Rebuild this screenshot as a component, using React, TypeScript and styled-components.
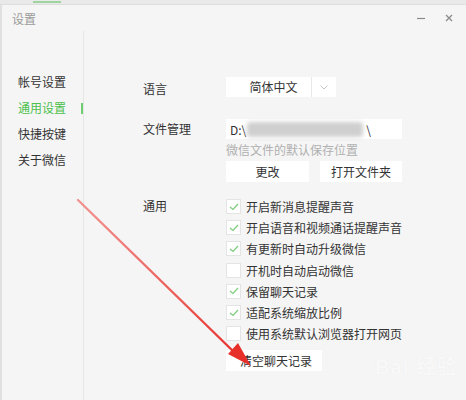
import React from "react";
import styled, { createGlobalStyle } from "styled-components";

const GlobalStyle = createGlobalStyle`
  html, body {
    margin: 0;
    padding: 0;
    background: #f5f5f5;
  }
  body {
    font-family: "Noto Sans CJK SC", "Liberation Sans", sans-serif;
    color: #333;
  }
`;

const Window = styled.div`
  position: relative;
  width: 466px;
  height: 400px;
  overflow: hidden;
  background: #f5f5f5;
  display: flex;
  flex-direction: column;
`;

const TopStrip = styled.div`
  height: 4px;
  background: #e9e9e9;
  border-bottom: 1px solid #dedede;
  display: flex;
  align-items: flex-end;
  padding-left: 33px;

  .tab-line {
    width: 28px;
    height: 2px;
    margin-bottom: 1px;
    background: #9fd49f;
  }
`;

const Frame = styled.div`
  flex: 1;
  display: flex;
  flex-direction: column;
  border-left: 2px solid #e0e0e0;
`;

const TitleBar = styled.div`
  height: 26px;
  display: flex;
  align-items: center;
  padding: 0 10px 0 10px;

  .title {
    font-size: 12px;
    color: #9a9a9a;
    flex: 1;
    padding-top: 1px;
  }
  .controls {
    display: flex;
    align-items: center;
    gap: 18px;
    padding-right: 2px;
  }
`;

const Body = styled.div`
  flex: 1;
  display: flex;
`;

const Sidebar = styled.div`
  width: 81px;
  border-right: 1px solid #e6e6e6;
  padding-top: 38px;
  display: flex;
  flex-direction: column;
`;

const NavItem = styled.div<{ $active?: boolean }>`
  position: relative;
  height: 26px;
  line-height: 26px;
  padding-left: 16px;
  font-size: 12px;
  color: ${(p) => (p.$active ? "#4cbf4c" : "#333")};

  &::after {
    content: "";
    display: ${(p) => (p.$active ? "block" : "none")};
    position: absolute;
    right: 0;
    top: 8px;
    width: 2px;
    height: 11px;
    background: #6fcd6f;
  }
`;

const Content = styled.div`
  flex: 1;
  padding: 46px 0 0 59px;
  display: flex;
  flex-direction: column;
`;

const Section = styled.div<{ $gap?: number }>`
  display: flex;
  margin-top: ${(p) => p.$gap ?? 0}px;
`;

const Label = styled.div<{ $top?: number }>`
  width: 83px;
  font-size: 12px;
  line-height: 20px;
  padding-top: ${(p) => p.$top ?? 0}px;
  flex-shrink: 0;
`;

const Column = styled.div`
  display: flex;
  flex-direction: column;
`;

const Select = styled.div`
  width: 110px;
  height: 20px;
  background: #fff;
  display: flex;
  font-size: 12px;
  line-height: 20px;

  .value {
    width: 86px;
    padding-left: 10px;
    box-sizing: border-box;
    text-align: center;
    border-right: 1px solid #e8e8e8;
  }
  .arrow {
    flex: 1;
    display: flex;
    align-items: center;
    justify-content: center;
  }
`;

const PathInput = styled.div`
  width: 176px;
  height: 20px;
  background: #fff;
  display: flex;
  align-items: center;
  font-size: 12px;
  padding-left: 4px;
  box-sizing: border-box;

  .blur {
    width: 116px;
    height: 15px;
    margin: 0 3px 0 1px;
    background: #cfcfcf;
    border-radius: 3px;
    filter: blur(2px);
  }
`;

const Hint = styled.div`
  font-size: 12px;
  color: #b0b0b0;
  line-height: 18px;
  margin-top: 2px;
`;

const ButtonRow = styled.div`
  display: flex;
  gap: 11px;
  margin-top: 2px;
`;

const Button = styled.div<{ $width: number; $align?: string }>`
  width: ${(p) => p.$width}px;
  height: 21px;
  line-height: 21px;
  background: #fff;
  font-size: 12px;
  text-align: ${(p) => p.$align ?? "center"};
  padding-left: ${(p) => (p.$align === "left" ? 14 : 0)}px;
  box-sizing: border-box;
`;

const CheckRow = styled.div`
  height: 21.2px;
  display: flex;
  align-items: center;
  font-size: 12px;

  .box {
    width: 15px;
    height: 15px;
    background: #fff;
    border: 1px solid #e4e4e4;
    box-sizing: border-box;
    margin-right: 5px;
    display: flex;
    align-items: center;
    justify-content: center;
  }
`;

const Overlay = styled.svg`
  position: absolute;
  left: 0;
  top: 0;
  pointer-events: none;
`;

const Watermark = styled.div`
  position: absolute;
  right: 8px;
  bottom: 20px;
  font-family: "Liberation Sans", "Noto Sans CJK SC", sans-serif;
  font-size: 20px;
  font-weight: bold;
  color: #f8f8f8;
  text-shadow: 0 0 1px #ececec;
  letter-spacing: 1px;
`;

const Check = () => (
  <svg width="10" height="8" viewBox="0 0 10 8">
    <path d="M1 4 L4 6.5 L9 1" fill="none" stroke="#7ccc7c" strokeWidth="1.2" />
  </svg>
);

const options: { text: string; checked: boolean }[] = [
  { text: "开启新消息提醒声音", checked: true },
  { text: "开启语音和视频通话提醒声音", checked: true },
  { text: "有更新时自动升级微信", checked: true },
  { text: "开机时自动启动微信", checked: false },
  { text: "保留聊天记录", checked: true },
  { text: "适配系统缩放比例", checked: true },
  { text: "使用系统默认浏览器打开网页", checked: false },
];

const App = () => {
  return (
    <Window>
      <GlobalStyle />
      <TopStrip>
        <div className="tab-line" />
      </TopStrip>
      <Frame>
        <TitleBar>
          <span className="title">设置</span>
          <div className="controls">
            <svg width="10" height="10" viewBox="0 0 10 10">
              <path d="M1 5.5 H9" stroke="#8a8a8a" strokeWidth="1.2" />
            </svg>
            <svg width="10" height="10" viewBox="0 0 10 10">
              <path d="M2 2 L8 8 M8 2 L2 8" stroke="#8a8a8a" strokeWidth="1.3" />
            </svg>
          </div>
        </TitleBar>
        <Body>
          <Sidebar>
            <NavItem>帐号设置</NavItem>
            <NavItem $active>通用设置</NavItem>
            <NavItem>快捷按键</NavItem>
            <NavItem>关于微信</NavItem>
          </Sidebar>
          <Content>
            <Section>
              <Label $top={2}>语言</Label>
              <Select>
                <div className="value">简体中文</div>
                <div className="arrow">
                  <svg width="8" height="5" viewBox="0 0 8 5">
                    <path d="M0.5 0.5 L4 4 L7.5 0.5" fill="none" stroke="#c4c4c4" strokeWidth="1" />
                  </svg>
                </div>
              </Select>
            </Section>
            <Section $gap={20}>
              <Label>文件管理</Label>
              <Column>
                <PathInput>
                  D:\
                  <div className="blur" />\
                </PathInput>
                <Hint>微信文件的默认保存位置</Hint>
                <ButtonRow>
                  <Button $width={83}>更改</Button>
                  <Button $width={82}>打开文件夹</Button>
                </ButtonRow>
              </Column>
            </Section>
            <Section $gap={14}>
              <Label>通用</Label>
              <Column>
                {options.map((o) => (
                  <CheckRow key={o.text}>
                    <div className="box">{o.checked && <Check />}</div>
                    {o.text}
                  </CheckRow>
                ))}
                <Section $gap={6}>
                  <Button $width={96} $align="left">清空聊天记录</Button>
                </Section>
              </Column>
            </Section>
          </Content>
        </Body>
      </Frame>
      <Watermark>Bai 经验</Watermark>
      <Overlay width="466" height="400" viewBox="0 0 466 400">
        <defs>
          <linearGradient id="arrowFade" x1="78" y1="200" x2="240" y2="355" gradientUnits="userSpaceOnUse">
            <stop offset="0" stopColor="#ef6b66" stopOpacity="0.7" />
            <stop offset="1" stopColor="#e8302a" />
          </linearGradient>
        </defs>
        <path d="M78 200 L236 354" stroke="url(#arrowFade)" strokeWidth="2.4" strokeLinecap="round" />
        <path d="M251 366 L238 343 L228 354 Z" fill="#e8302a" />
      </Overlay>
    </Window>
  );
};

export default App;
